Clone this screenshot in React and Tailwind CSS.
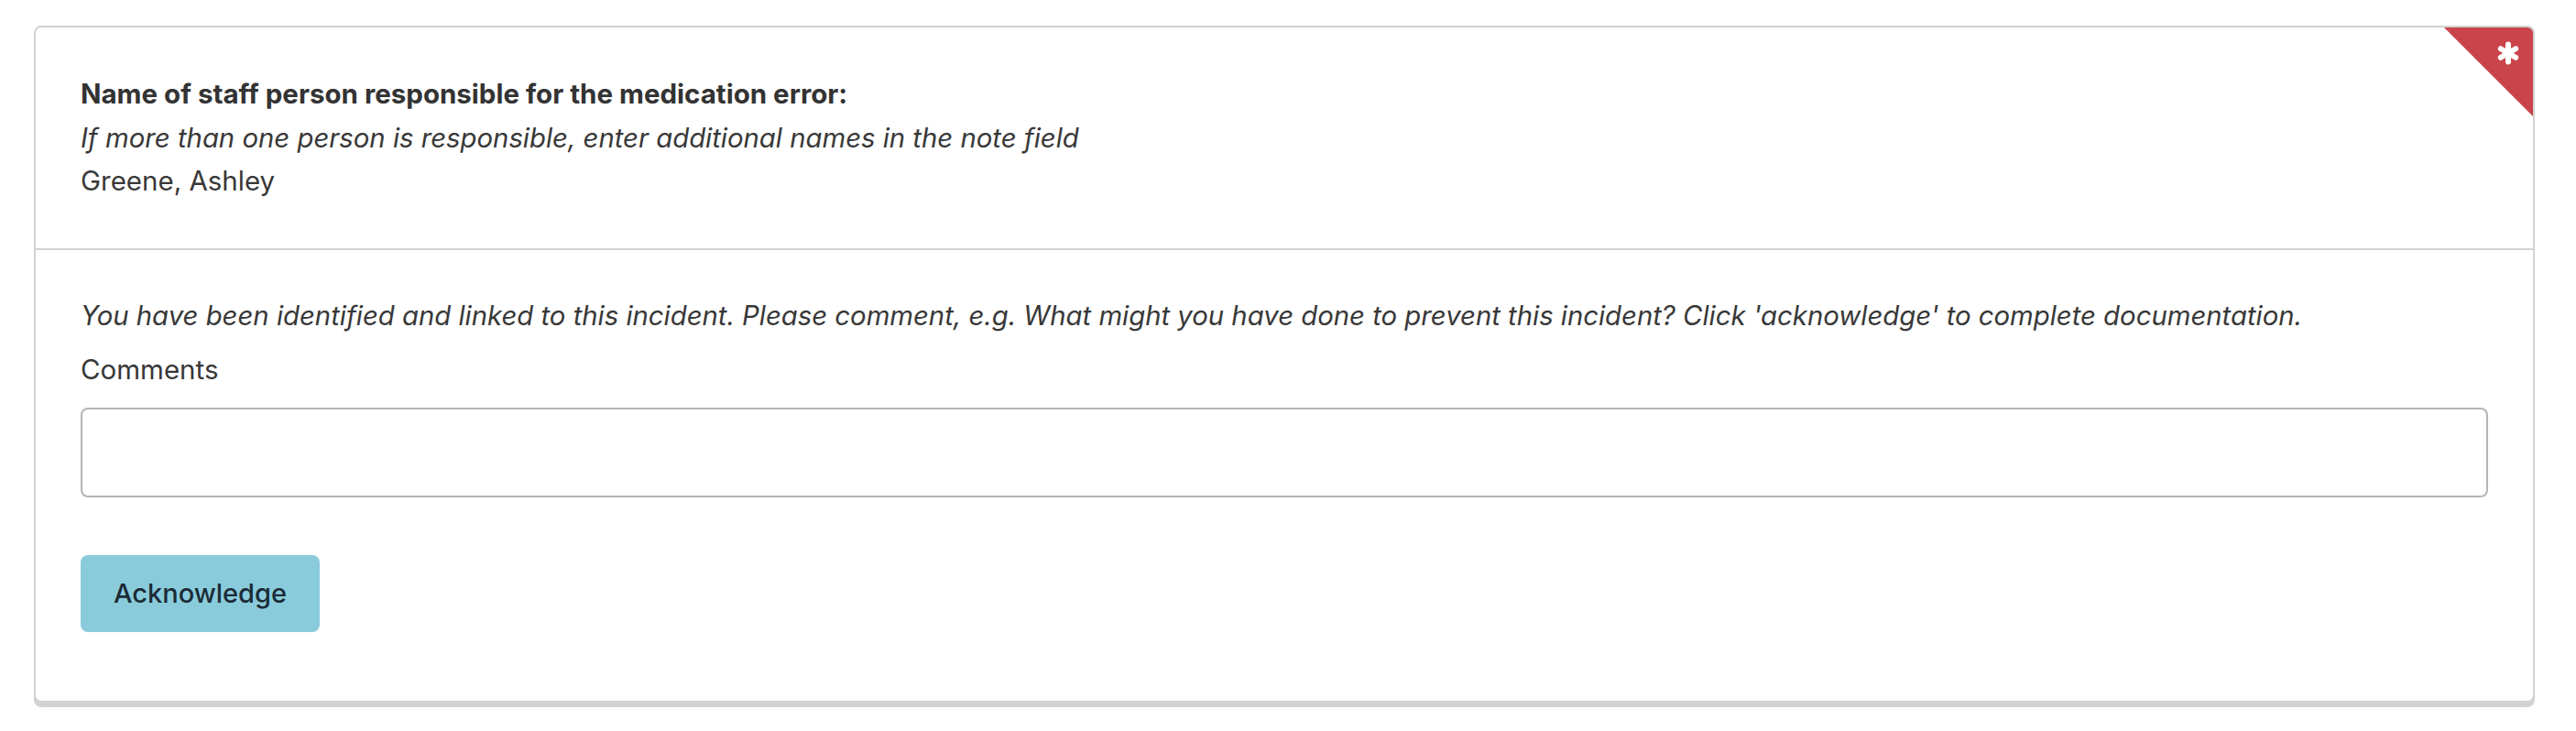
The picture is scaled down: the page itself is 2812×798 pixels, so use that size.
import React from "react";

function Asterisk() {
  return (
    <svg width="26" height="26" viewBox="0 0 26 26" className="absolute right-[14px] top-[15px]">
      <g stroke="#fff" strokeWidth="6" strokeLinecap="round">
        <line x1="13" y1="3.5" x2="13" y2="22.5" />
        <line x1="4.8" y1="8.25" x2="21.2" y2="17.75" />
        <line x1="4.8" y1="17.75" x2="21.2" y2="8.25" />
      </g>
    </svg>
  );
}

export default function App() {
  return (
    <div className="min-h-screen bg-white pt-[28px] pl-[37px] font-['Inter',sans-serif] text-[#383838]">
      <div className="relative w-[2730px] rounded-[8px] border-2 border-[#d2d2d2] bg-white shadow-[0_5px_0_#d2d2d2] overflow-hidden">
        <div className="absolute right-0 top-0 h-[97px] w-[97px] bg-[#c9444b] [clip-path:polygon(0_0,100%_0,100%_100%)]">
          <Asterisk />
        </div>

        <div className="px-[49px] py-[49px] text-[29.5px] leading-[47.5px]">
          <div className="font-bold text-[#333]">
            Name of staff person responsible for the medication error:
          </div>
          <div className="italic text-[29.3px]">
            If more than one person is responsible, enter additional names in the note field
          </div>
          <div>Greene, Ashley</div>
        </div>

        <div className="border-t-2 border-[#d2d2d2] px-[49px] pt-[48px] pb-[75px] text-[29.5px] leading-[47.5px]">
          <p className="italic text-[29.3px]">
            You have been identified and linked to this incident. Please comment, e.g. What might you have done to prevent this incident? Click 'acknowledge' to complete documentation.
          </p>
          <label className="mt-[12px] block">Comments</label>
          <textarea
            className="mt-[17px] block h-[98px] w-full resize-none rounded-[8px] border-2 border-[#b4b4b4] bg-white"
            rows={1}
          />
          <button className="mt-[63px] h-[84px] w-[261px] rounded-[8px] bg-[#8acbdb] text-[29px] font-medium text-[#1b2b36]">
            Acknowledge
          </button>
        </div>
      </div>
    </div>
  );
}
